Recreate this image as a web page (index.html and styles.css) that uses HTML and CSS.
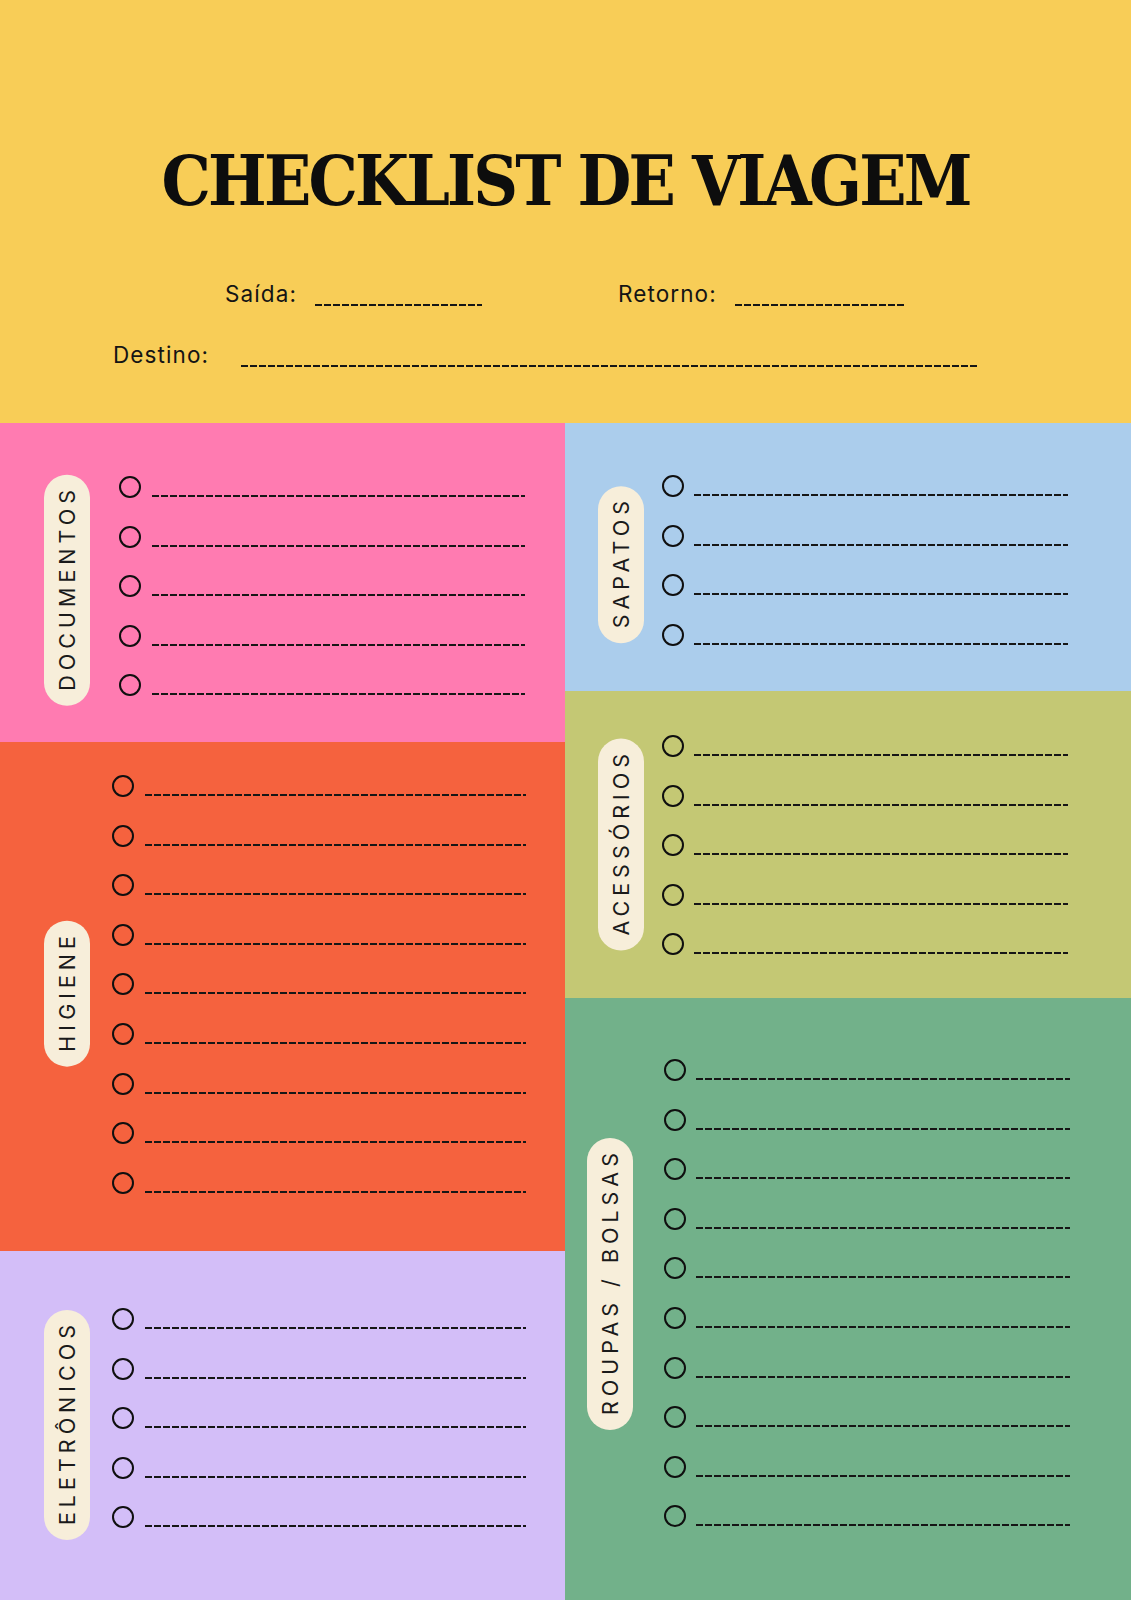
FILE: index.html
```html
<!DOCTYPE html>
<html lang="pt-BR">
<head>
<meta charset="utf-8">
<title>Checklist de Viagem</title>
<link rel="stylesheet" href="styles.css">
</head>
<body>
<div class="page">
  <header class="hero">
    <h1 class="title">CHECKLIST DE VIAGEM</h1>
    <div class="fields fields--top">
      <div class="field field--saida"><span class="label label--saida">Saída:</span><span class="blank blank--saida"></span></div>
      <div class="field field--retorno"><span class="label label--retorno">Retorno:</span><span class="blank blank--retorno"></span></div>
    </div>
    <div class="fields fields--bottom">
      <div class="field field--destino"><span class="label label--destino">Destino:</span><span class="blank blank--destino"></span></div>
    </div>
  </header>

  <main class="grid">
    <div class="col col--left">
      <section class="sec sec--docs">
        <div class="pill"><span class="pill-text">DOCUMENTOS</span></div>
        <ul class="list">
          <li class="item"><span class="check"></span><span class="rule"></span></li>
          <li class="item"><span class="check"></span><span class="rule"></span></li>
          <li class="item"><span class="check"></span><span class="rule"></span></li>
          <li class="item"><span class="check"></span><span class="rule"></span></li>
          <li class="item"><span class="check"></span><span class="rule"></span></li>
        </ul>
      </section>
      <section class="sec sec--higiene">
        <div class="pill"><span class="pill-text">HIGIENE</span></div>
        <ul class="list">
          <li class="item"><span class="check"></span><span class="rule"></span></li>
          <li class="item"><span class="check"></span><span class="rule"></span></li>
          <li class="item"><span class="check"></span><span class="rule"></span></li>
          <li class="item"><span class="check"></span><span class="rule"></span></li>
          <li class="item"><span class="check"></span><span class="rule"></span></li>
          <li class="item"><span class="check"></span><span class="rule"></span></li>
          <li class="item"><span class="check"></span><span class="rule"></span></li>
          <li class="item"><span class="check"></span><span class="rule"></span></li>
          <li class="item"><span class="check"></span><span class="rule"></span></li>
        </ul>
      </section>
      <section class="sec sec--eletronicos">
        <div class="pill"><span class="pill-text">ELETRÔNICOS</span></div>
        <ul class="list">
          <li class="item"><span class="check"></span><span class="rule"></span></li>
          <li class="item"><span class="check"></span><span class="rule"></span></li>
          <li class="item"><span class="check"></span><span class="rule"></span></li>
          <li class="item"><span class="check"></span><span class="rule"></span></li>
          <li class="item"><span class="check"></span><span class="rule"></span></li>
        </ul>
      </section>
    </div>

    <div class="col col--right">
      <section class="sec sec--sapatos">
        <div class="pill"><span class="pill-text">SAPATOS</span></div>
        <ul class="list">
          <li class="item"><span class="check"></span><span class="rule"></span></li>
          <li class="item"><span class="check"></span><span class="rule"></span></li>
          <li class="item"><span class="check"></span><span class="rule"></span></li>
          <li class="item"><span class="check"></span><span class="rule"></span></li>
        </ul>
      </section>
      <section class="sec sec--acessorios">
        <div class="pill"><span class="pill-text">ACESSÓRIOS</span></div>
        <ul class="list">
          <li class="item"><span class="check"></span><span class="rule"></span></li>
          <li class="item"><span class="check"></span><span class="rule"></span></li>
          <li class="item"><span class="check"></span><span class="rule"></span></li>
          <li class="item"><span class="check"></span><span class="rule"></span></li>
          <li class="item"><span class="check"></span><span class="rule"></span></li>
        </ul>
      </section>
      <section class="sec sec--roupas">
        <div class="pill"><span class="pill-text">ROUPAS / BOLSAS</span></div>
        <ul class="list">
          <li class="item"><span class="check"></span><span class="rule"></span></li>
          <li class="item"><span class="check"></span><span class="rule"></span></li>
          <li class="item"><span class="check"></span><span class="rule"></span></li>
          <li class="item"><span class="check"></span><span class="rule"></span></li>
          <li class="item"><span class="check"></span><span class="rule"></span></li>
          <li class="item"><span class="check"></span><span class="rule"></span></li>
          <li class="item"><span class="check"></span><span class="rule"></span></li>
          <li class="item"><span class="check"></span><span class="rule"></span></li>
          <li class="item"><span class="check"></span><span class="rule"></span></li>
          <li class="item"><span class="check"></span><span class="rule"></span></li>
        </ul>
      </section>
    </div>
  </main>
</div>
</body>
</html>
```

FILE: styles.css
```css
* { box-sizing: border-box; }

html, body {
  margin: 0;
  padding: 0;
}

body {
  font-family: "Inter", "Noto Sans", "Liberation Sans", sans-serif;
  color: #151515;
  background: #F8CD57;
}

.page {
  width: 1131px;
  height: 1600px;
  overflow: hidden;
  display: flex;
  flex-direction: column;
}

/* ---------- Header ---------- */
.hero {
  height: 423px;
  flex: none;
  background: #F8CD57;
  padding-top: 146px;
}

.title {
  margin: 0;
  font-family: "DejaVu Serif Condensed", "DejaVu Serif", "Liberation Serif", serif;
  font-stretch: condensed;
  font-weight: 700;
  font-size: 69px;
  line-height: 69px;
  text-align: center;
  color: #0d0d0d;
  letter-spacing: -2.8px;
}

.fields {
  display: flex;
  align-items: flex-end;
}

.fields--top {
  margin-top: 66px;
  padding-left: 225px;
  gap: 136px;
}

.fields--bottom {
  margin-top: 35px;
  padding-left: 113px;
}

.field {
  display: flex;
  align-items: flex-end;
}

.label {
  font-size: 22.5px;
  line-height: 26px;
  font-weight: 400;
  letter-spacing: 1.1px;
  color: #141414;
}

.label--saida { width: 90px; }
.label--retorno { width: 117px; }
.label--destino { width: 128px; }

.blank {
  height: 2px;
  margin-bottom: 1px;
  background: repeating-linear-gradient(to right, #161616 0 7px, transparent 7px 9px);
}

.blank--saida { width: 167px; }
.blank--retorno { width: 171px; }
.blank--destino { width: 736px; }

/* ---------- Grid ---------- */
.grid {
  flex: 1;
  display: flex;
}

.col {
  display: flex;
  flex-direction: column;
}

.col--left { width: 565px; }
.col--right { width: 566px; }

.sec {
  display: flex;
  align-items: flex-start;
}

.pill {
  flex: none;
  width: 46px;
  border-radius: 23px;
  background: #F7EEDA;
  display: flex;
  align-items: center;
  justify-content: center;
  padding: 15px 0 10px;
  writing-mode: vertical-rl;
  transform: rotate(180deg);
}

.pill-text {
  font-family: "Inter", "Noto Sans", "Liberation Sans", sans-serif;
  font-size: 21.5px;
  line-height: 46px;
  letter-spacing: 5px;
  color: #1a1a1a;
  font-weight: 400;
  white-space: nowrap;
}

.list {
  list-style: none;
  margin: 0;
  padding: 0;
  display: flex;
  flex-direction: column;
  gap: 27.6px;
}

.item {
  display: flex;
  align-items: flex-end;
  gap: 11px;
  height: 22px;
}

.check {
  flex: none;
  width: 22px;
  height: 22px;
  border: 2.3px solid #0f0f0f;
  border-radius: 50%;
}

.rule {
  flex: none;
  height: 2px;
  margin-bottom: 1px;
  width: 374px;
  background: repeating-linear-gradient(to right, #161616 0 7px, transparent 7px 9px);
}

/* ---------- Sections: left column ---------- */
.sec--docs {
  height: 319px;
  background: #FF7BB1;
  padding-left: 44px;
}
.sec--docs .pill { margin-top: 52px; }
.sec--docs .list { margin-top: 53px; margin-left: 28.5px; }
.sec--docs .rule { width: 373px; }

.sec--higiene {
  height: 509px;
  background: #F5623E;
  padding-left: 44px;
}
.sec--higiene .pill { margin-top: 179px; }
.sec--higiene .list { margin-top: 33px; margin-left: 21.5px; }
.sec--higiene .rule { width: 381px; }

.sec--eletronicos {
  flex: 1;
  background: #D3BEF8;
  padding-left: 44px;
}
.sec--eletronicos .pill { margin-top: 59px; }
.sec--eletronicos .list { margin-top: 57px; margin-left: 21.5px; }
.sec--eletronicos .rule { width: 381px; }

/* ---------- Sections: right column ---------- */
.sec--sapatos {
  height: 267.5px;
  background: #ABCDEC;
  padding-left: 33px;
}
.sec--sapatos .pill { margin-top: 63px; }
.sec--sapatos .list { margin-top: 52px; margin-left: 17.5px; }
.sec--sapatos .item { gap: 10.5px; }

.sec--acessorios {
  height: 307.5px;
  background: #C4C874;
  padding-left: 33px;
}
.sec--acessorios .pill { margin-top: 48.5px; }
.sec--acessorios .list { margin-top: 44.5px; margin-left: 17.5px; }
.sec--acessorios .item { gap: 10.5px; }

.sec--roupas {
  flex: 1;
  background: #72B18A;
  padding-left: 22px;
}
.sec--roupas .pill { margin-top: 140px; }
.sec--roupas .list { margin-top: 61px; margin-left: 30.5px; }
.sec--roupas .item { gap: 10.5px; }
```
